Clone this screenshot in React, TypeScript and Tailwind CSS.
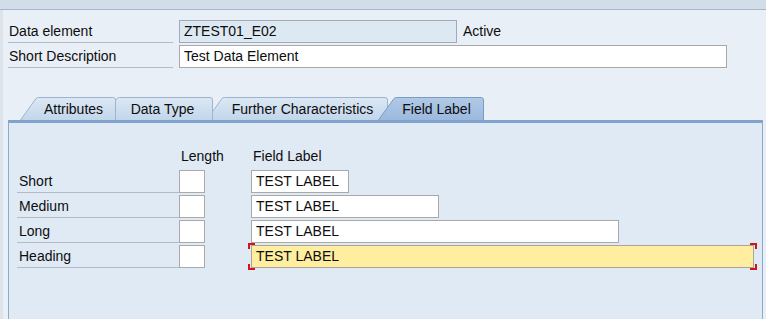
import React from 'react';

type Tab = { label: string; width: number; slant: number; overlap: number; z: string; active?: boolean };

const TABS: Tab[] = [
  { label: 'Attributes', width: 96, slant: 17, overlap: 0, z: 'z-30' },
  { label: 'Data Type', width: 112, slant: 17, overlap: 15, z: 'z-20' },
  { label: 'Further Characteristics', width: 182, slant: 17, overlap: 7, z: 'z-10' },
  { label: 'Field Label', width: 106, slant: 17, overlap: 10, z: 'z-40', active: true },
];

const LABEL_ROWS = [
  { name: 'Short', width: 98 },
  { name: 'Medium', width: 188 },
  { name: 'Long', width: 368 },
  { name: 'Heading', width: 503, focused: true },
];

// SAP-like slanted tab drawn as svg behind the caption
const TabShape: React.FC<{ tab: Tab; id: string }> = ({ tab, id }) => {
  const w = tab.width;
  const h = 23;
  const d = `M0.5,${h} L${tab.slant - 1},1.5 Q${tab.slant},0.5 ${tab.slant + 1.5},0.5 L${w - 3},0.5 Q${w - 0.5},0.5 ${w - 0.5},3 L${w - 0.5},${h}`;
  return (
    <svg className="absolute inset-0" width={w} height={h} viewBox={`0 0 ${w} ${h}`}>
      <defs>
        <linearGradient id={id} x1="0" y1="0" x2="0" y2="1">
          {tab.active ? (
            <>
              <stop offset="0" stopColor="#b1c9e6" />
              <stop offset="1" stopColor="#9bb9de" />
            </>
          ) : (
            <>
              <stop offset="0" stopColor="#dce8f4" />
              <stop offset="1" stopColor="#c2d6eb" />
            </>
          )}
        </linearGradient>
      </defs>
      <path d={d + ' Z'} fill={`url(#${id})`} />
      <path d={d} fill="none" stroke={tab.active ? '#7b9bc5' : '#9cb4d0'} strokeWidth="1" />
    </svg>
  );
};

export default function App() {
  return (
    <div className="w-[766px] h-[319px] overflow-hidden bg-[#e9eff6] font-['Liberation_Sans',Arial,sans-serif] text-[14px] text-[#0d0d0d] flex flex-col">
      <div className="h-[10px] shrink-0 bg-[#d1deea] border-b border-[#a6b6c7]" />
      <div className="flex flex-1 min-h-0">
        <div className="w-[3px] shrink-0 bg-[#dce3eb]" />
        <div className="flex-1 flex flex-col pl-[5px] pt-[10px]">
          {/* Header fields */}
          <div className="flex items-center h-[23px]">
            <div className="w-[165px] h-full flex items-center pl-[1px] border-b border-[#b3bbc4]">Data element</div>
            <div className="ml-[6px] w-[278px] h-full flex items-center px-[4px] bg-[#dce8f2] border border-[#a2abb5]">ZTEST01_E02</div>
            <span className="ml-[6px]">Active</span>
          </div>
          <div className="flex items-center h-[23px] mt-[2px]">
            <div className="w-[165px] h-full flex items-center pl-[1px] border-b border-[#b3bbc4]">Short Description</div>
            <div className="ml-[6px] w-[548px] h-full flex items-center px-[4px] bg-white border border-[#a9a9a9]">Test Data Element</div>
          </div>

          {/* Tab strip */}
          <div className="flex h-[23px] mt-[29px] pl-[12px]">
            {TABS.map((tab, i) => (
              <div
                key={tab.label}
                className={`relative h-full shrink-0 ${tab.z}`}
                style={{ width: tab.width, marginLeft: -tab.overlap }}
              >
                <TabShape tab={tab} id={`tabgrad${i}`} />
                <div
                  className="relative h-full flex items-center justify-center pt-[1px] pr-[6px] whitespace-nowrap"
                  style={{ paddingLeft: tab.slant }}
                >
                  {tab.label}
                </div>
              </div>
            ))}
          </div>

          {/* Tab panel */}
          <div className="w-[755px] flex-1 bg-[#dfeaf5] border-t-[3px] border-l border-r border-t-[#80a2cc] border-l-[#8eaacb] border-r-[#8eaacb] pl-[8px] pt-[22px]">
            <div className="flex items-center h-[22px]">
              <div className="w-[162px]" />
              <div className="w-[72px] pl-[2px]">Length</div>
              <div className="pl-[2px]">Field Label</div>
            </div>
            <div className="flex flex-col gap-[2px] mt-[3px]">
              {LABEL_ROWS.map((row) => (
                <div key={row.name} className="flex items-center h-[23px]">
                  <div className="w-[162px] h-full flex items-center pl-[2px] border-b border-[#b3bbc4]">{row.name}</div>
                  <div className="w-[26px] h-full bg-white border border-[#aaaaaa]" />
                  <div className="relative ml-[46px] h-full" style={{ width: row.width }}>
                    <div
                      className={`h-full flex items-center px-[4px] border ${
                        row.focused ? 'bg-[#ffeea0] border-[#aaa697]' : 'bg-white border-[#a9a9a9]'
                      }`}
                    >
                      TEST LABEL
                    </div>
                    {row.focused && (
                      <>
                        <span className="absolute -left-[3px] -top-[2px] w-[7px] h-[6px] border-l-2 border-t-2 border-[#d0141e]" />
                        <span className="absolute -left-[3px] -bottom-[2px] w-[7px] h-[6px] border-l-2 border-b-2 border-[#d0141e]" />
                        <span className="absolute -right-[3px] -top-[2px] w-[7px] h-[6px] border-r-2 border-t-2 border-[#d0141e]" />
                        <span className="absolute -right-[3px] -bottom-[2px] w-[7px] h-[6px] border-r-2 border-b-2 border-[#d0141e]" />
                      </>
                    )}
                  </div>
                </div>
              ))}
            </div>
          </div>
        </div>
      </div>
    </div>
  );
}
